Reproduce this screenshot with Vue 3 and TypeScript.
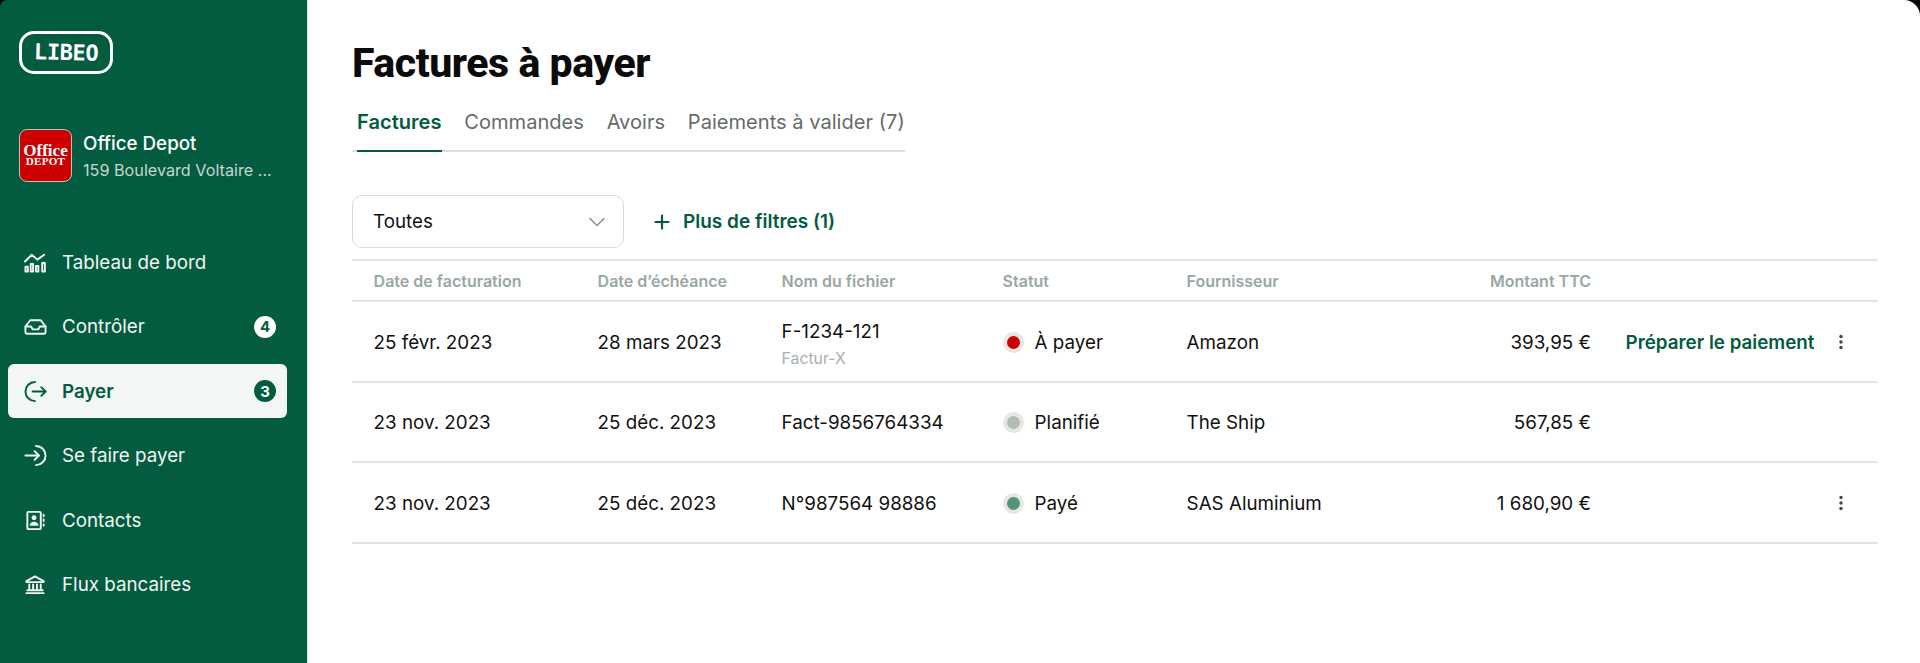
<template>
  <div class="app">
    <aside class="sidebar">
      <div class="logo"><span>LIBEO</span></div>

      <div class="company">
        <div class="company-logo">
          <span class="office">Office</span>
          <span class="depot">DEPOT</span>
        </div>
        <div class="company-info">
          <div class="company-name">Office Depot</div>
          <div class="company-address">159 Boulevard Voltaire ...</div>
        </div>
      </div>

      <nav class="nav">
        <a
          v-for="item in navItems"
          :key="item.label"
          class="nav-item"
          :class="{ active: item.active }"
        >
          <svg class="nav-icon" viewBox="0 0 24 24" fill="none" stroke="currentColor" stroke-width="2" stroke-linecap="round" stroke-linejoin="round">
            <path v-for="d in item.paths" :key="d" :d="d" />
            <path v-for="d in item.solid" :key="d" :d="d" fill="currentColor" stroke="none" />
          </svg>
          <span class="nav-label">{{ item.label }}</span>
          <span v-if="item.badge" class="nav-badge">{{ item.badge }}</span>
        </a>
      </nav>
    </aside>

    <main class="main">
      <h1 class="title">Factures à payer</h1>

      <div class="tabs">
        <a v-for="(tab, i) in tabs" :key="tab" class="tab" :class="{ current: i === 0 }">{{ tab }}</a>
      </div>

      <div class="filters">
        <div class="select">
          <span>Toutes</span>
          <svg width="18" height="10" viewBox="0 0 18 10" fill="none" stroke="#8c948f" stroke-width="1.6" stroke-linecap="round" stroke-linejoin="round">
            <path d="M2 1.5 9 8.5 16 1.5" />
          </svg>
        </div>
        <button class="more-filters">
          <svg width="16" height="16" viewBox="0 0 16 16" fill="none" stroke="currentColor" stroke-width="2.2" stroke-linecap="round">
            <path d="M8 1.5v13M1.5 8h13" />
          </svg>
          Plus de filtres (1)
        </button>
      </div>

      <table class="invoices">
        <colgroup>
          <col v-for="w in colWidths" :key="w.id" :style="{ width: w.px + 'px' }" />
        </colgroup>
        <thead>
          <tr>
            <th>Date de facturation</th>
            <th>Date d’échéance</th>
            <th>Nom du fichier</th>
            <th>Statut</th>
            <th>Fournisseur</th>
            <th class="right">Montant TTC</th>
            <th></th>
          </tr>
        </thead>
        <tbody>
          <tr v-for="row in rows" :key="row.file">
            <td>{{ row.billed }}</td>
            <td>{{ row.due }}</td>
            <td>
              <div>{{ row.file }}</div>
              <div v-if="row.sub" class="sub">{{ row.sub }}</div>
            </td>
            <td>
              <div class="status">
                <span class="dot" :class="row.statusClass"></span>
                {{ row.status }}
              </div>
            </td>
            <td>{{ row.supplier }}</td>
            <td class="right">{{ row.amount }}</td>
            <td>
              <div class="actions">
                <a v-if="row.action" class="action">{{ row.action }}</a>
                <svg v-if="row.menu" class="kebab" width="4" height="16" viewBox="0 0 4 16" fill="#3c4a43">
                  <circle cx="2" cy="2.5" r="1.7" />
                  <circle cx="2" cy="8" r="1.7" />
                  <circle cx="2" cy="13.5" r="1.7" />
                </svg>
              </div>
            </td>
          </tr>
        </tbody>
      </table>
    </main>
  </div>
</template>

<script setup lang="ts">
interface NavItem {
  label: string
  paths: string[]
  solid?: string[]
  badge?: number
  active?: boolean
}

interface Row {
  billed: string
  due: string
  file: string
  sub?: string
  status: string
  statusClass: string
  supplier: string
  amount: string
  action?: string
  menu: boolean
}

const navItems: NavItem[] = [
  {
    label: 'Tableau de bord',
    paths: [
      'M1 11 8 4l6 5 7-5',
      'M1.5 16.5h2.5v5H1.5z',
      'M7 13.5h2.5v8H7z',
      'M12.5 15.5H15v6h-2.5z',
      'M19 12.5h2.8v9H19z',
    ],
  },
  {
    label: 'Contrôler',
    paths: [
      'M6.5 5.5h11l5 6.5v6a1.5 1.5 0 0 1-1.5 1.5H3a1.5 1.5 0 0 1-1.5-1.5v-6z',
      'M1.5 12h6l1.5 3h6l1.5-3h6',
    ],
    badge: 4,
  },
  {
    label: 'Payer',
    paths: ['M11.5 2a10 10 0 0 0 0 20', 'M9 12h13.5', 'M18 7.5l4.5 4.5-4.5 4.5'],
    badge: 3,
    active: true,
  },
  {
    label: 'Se faire payer',
    paths: ['M12.5 2a10 10 0 0 1 0 20', 'M1.5 12H15.5', 'M11 7.5l4.5 4.5-4.5 4.5'],
  },
  {
    label: 'Contacts',
    paths: [
      'M4.5 3h12a1 1 0 0 1 1 1v16a1 1 0 0 1-1 1h-12a1 1 0 0 1-1-1V4a1 1 0 0 1 1-1z',
      'M20.5 6v1.5M20.5 11v1.5M20.5 16v1.5',
    ],
    solid: [
      'M10.5 6.5a2.6 2.6 0 1 0 0 5.2a2.6 2.6 0 1 0 0-5.2z',
      'M6 17.5c0-2.8 2-4.3 4.5-4.3s4.5 1.5 4.5 4.3z',
    ],
  },
  {
    label: 'Flux bancaires',
    paths: [
      'M11.5 3.5 20.5 8.5v1h-18v-1z',
      'M5.5 12v5M9.5 12v5M13.5 12v5M17.5 12v5',
      'M3.5 18h16M2.5 21h18',
    ],
  },
]

const tabs = ['Factures', 'Commandes', 'Avoirs', 'Paiements à valider (7)']

const colWidths = [
  { id: 'billed', px: 224 },
  { id: 'due', px: 184 },
  { id: 'file', px: 221 },
  { id: 'status', px: 184 },
  { id: 'supplier', px: 271 },
  { id: 'amount', px: 177 },
  { id: 'actions', px: 265 },
]

const rows: Row[] = [
  {
    billed: '25 févr. 2023',
    due: '28 mars 2023',
    file: 'F-1234-121',
    sub: 'Factur-X',
    status: 'À payer',
    statusClass: 'red',
    supplier: 'Amazon',
    amount: '393,95 €',
    action: 'Préparer le paiement',
    menu: true,
  },
  {
    billed: '23 nov. 2023',
    due: '25 déc. 2023',
    file: 'Fact-9856764334',
    status: 'Planifié',
    statusClass: 'grey',
    supplier: 'The Ship',
    amount: '567,85 €',
    menu: false,
  },
  {
    billed: '23 nov. 2023',
    due: '25 déc. 2023',
    file: 'N°987564 98886',
    status: 'Payé',
    statusClass: 'green',
    supplier: 'SAS Aluminium',
    amount: '1 680,90 €',
    menu: true,
  },
]
</script>

<style>
html,
body {
  background: #000;
  margin: 0;
}
</style>

<style scoped>
.app {
  display: flex;
  height: 663px;
  overflow: hidden;
  background: #0a0a0a;
  font-family: Inter, 'Liberation Sans', sans-serif;
  color: #111;
}

.sidebar {
  width: 307px;
  flex-shrink: 0;
  box-sizing: border-box;
  padding: 31px 20px 0 8px;
  background: #035c3f;
  border-top-left-radius: 7px;
  color: #fff;
}

.logo {
  width: 94px;
  height: 43px;
  margin-left: 11px;
  box-sizing: border-box;
  display: flex;
  align-items: center;
  justify-content: center;
  border: 3px solid #fff;
  border-radius: 15px;
}

.logo span {
  font-family: 'DejaVu Sans Mono', monospace;
  font-weight: 700;
  font-size: 22px;
  line-height: 26px;
  letter-spacing: -0.4px;
  transform: rotate(1.5deg);
}

.company {
  display: flex;
  align-items: center;
  gap: 11px;
  margin: 54px 0 0 11px;
}

.company-logo {
  width: 53px;
  height: 53px;
  box-sizing: border-box;
  display: flex;
  flex-direction: column;
  align-items: center;
  justify-content: center;
  background: #cc0000;
  border: 1px solid #b9c4bd;
  border-radius: 8px;
  font-family: 'Liberation Serif', serif;
  font-weight: 700;
}

.office {
  font-size: 17px;
  line-height: 12px;
}

.depot {
  font-size: 11px;
  line-height: 9px;
  letter-spacing: 0.3px;
}

.company-info {
  padding-top: 2px;
}

.company-name {
  font-size: 18.8px;
  font-weight: 500;
  line-height: 28px;
}

.company-address {
  font-size: 16.2px;
  line-height: 24px;
  color: #c5d6cf;
  white-space: nowrap;
}

.nav {
  display: flex;
  flex-direction: column;
  gap: 10.5px;
  margin-top: 53px;
}

.nav-item {
  display: flex;
  align-items: center;
  height: 54px;
  padding: 0 11px 0 16px;
  border-radius: 6px;
  font-size: 18.8px;
  color: #f1f6f3;
}

.nav-item.active {
  background: #f2f6f4;
  color: #035c3f;
  font-weight: 600;
}

.nav-icon {
  width: 23px;
  height: 23px;
  margin-right: 15px;
  flex-shrink: 0;
}

.nav-label {
  flex: 1;
}

.nav-badge {
  width: 22px;
  height: 22px;
  display: flex;
  align-items: center;
  justify-content: center;
  border-radius: 50%;
  background: #fff;
  color: #035c3f;
  font-size: 15px;
  font-weight: 700;
}

.active .nav-badge {
  background: #035c3f;
  color: #fff;
}

.main {
  flex: 1;
  box-sizing: border-box;
  padding: 0 42px 0 44px;
  background: #fff;
  border-left: 1px solid #dfe3e0;
  border-top-right-radius: 16px;
}

.title {
  margin: 40px 0 0;
  font-family: Roboto, 'Liberation Sans', sans-serif;
  font-size: 41px;
  line-height: 46px;
  font-weight: 800;
  letter-spacing: -0.45px;
  color: #0b0b0b;
}

.tabs {
  display: inline-flex;
  gap: 22.7px;
  margin: 13px 0 0 0;
  padding-left: 5px;
  height: 53px;
  box-sizing: border-box;
  align-items: flex-start;
  border-bottom: 2px solid #dededa;
}

.tab {
  height: 53px;
  box-sizing: border-box;
  padding-top: 10px;
  line-height: 26px;
  font-size: 20.1px;
  color: #656b66;
}

.tab.current {
  color: #035c3f;
  font-weight: 600;
  border-bottom: 2px solid #035c3f;
}

.filters {
  display: flex;
  align-items: center;
  gap: 30px;
  margin-top: 43px;
}

.select {
  width: 272px;
  height: 53px;
  box-sizing: border-box;
  display: flex;
  align-items: center;
  justify-content: space-between;
  padding: 0 17px 0 20px;
  border: 1px solid #dadcd8;
  border-radius: 10px;
  font-size: 18.8px;
}

.more-filters {
  display: flex;
  align-items: center;
  gap: 13px;
  padding: 0;
  border: 0;
  background: none;
  color: #035c3f;
  font-family: inherit;
  font-size: 19px;
  font-weight: 600;
}

.invoices {
  width: 1526px;
  margin-top: 11px;
  table-layout: fixed;
  border-collapse: collapse;
  font-size: 18.8px;
}

.invoices th,
.invoices td {
  padding: 0 22px 0 21.6px;
  text-align: left;
  border-top: 2px solid #e2e4e1;
  border-bottom: 2px solid #e2e4e1;
}

.invoices th {
  height: 39px;
  font-size: 16px;
  font-weight: 600;
  color: #98a89f;
}

.invoices td {
  height: 76.5px;
  padding-top: 2px;
}

.invoices .right {
  text-align: right;
}

.sub {
  margin-top: 6px;
  margin-bottom: -3px;
  font-size: 15.8px;
  color: #a9b0ac;
}

.status {
  display: flex;
  align-items: center;
  gap: 11px;
}

.dot {
  width: 21px;
  height: 21px;
  box-sizing: border-box;
  border: 4.5px solid #e7e8e4;
  border-radius: 50%;
}

.dot.red {
  background: #cc0000;
}

.dot.grey {
  background: #b1bcb6;
}

.dot.green {
  background: #53937c;
}

.actions {
  display: flex;
  align-items: center;
  min-height: 24px;
  margin-left: -9px;
}

.action {
  color: #035c3f;
  font-weight: 600;
  white-space: nowrap;
}

.kebab {
  margin-left: auto;
  margin-right: 13px;
}
</style>
